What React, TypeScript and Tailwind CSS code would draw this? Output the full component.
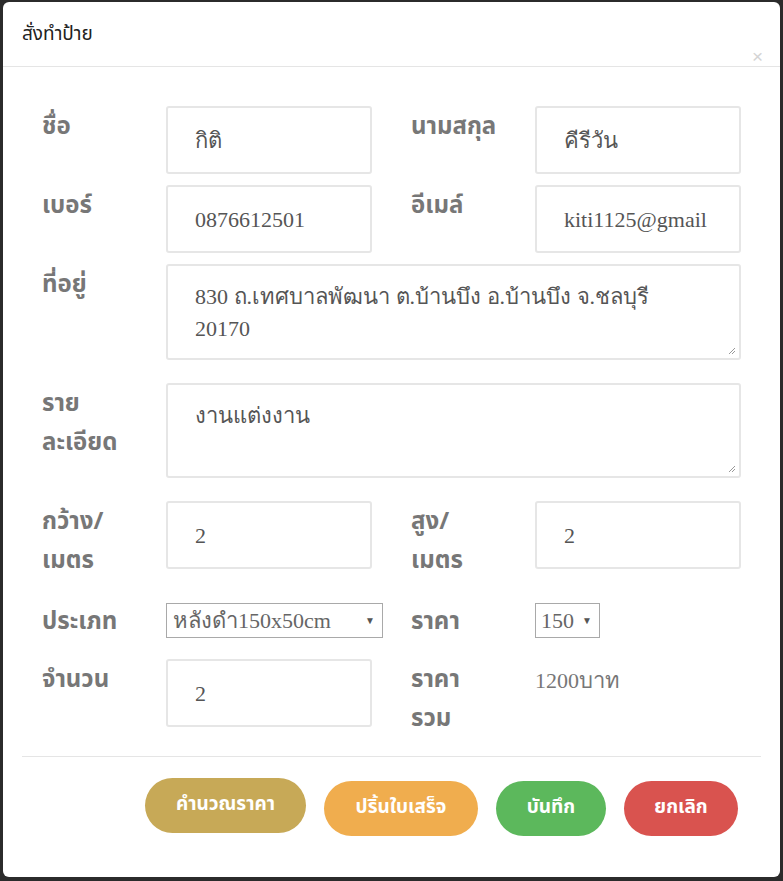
import React from "react";

const labelCls =
  "pt-[2px] text-[24px] leading-[39px] font-bold text-[#777] [font-family:'Noto_Sans_Thai','Noto_Sans','DejaVu_Sans',sans-serif]";
const inputCls =
  "h-[68px] w-[206px] rounded-[3px] border-2 border-[#e6e6e6] bg-white pl-[27px] flex items-center text-[22px] text-[#555] [font-family:'Liberation_Serif','DejaVu_Serif',serif] overflow-hidden whitespace-nowrap";

function Field({ value }: { value: string }) {
  return <div className={inputCls}>{value}</div>;
}

function ResizeGrip() {
  return (
    <svg
      className="absolute right-[3px] bottom-[3px]"
      width="8"
      height="8"
      viewBox="0 0 8 8"
    >
      <line x1="1" y1="7" x2="7" y2="1" stroke="#999" strokeWidth="1" />
      <line x1="4" y1="7" x2="7" y2="4" stroke="#999" strokeWidth="1" />
    </svg>
  );
}

export default function App() {
  return (
    <div className="h-[881px] w-[783px] bg-[#2b2b2b] pt-[2px] pl-[3px] overflow-hidden">
      <div className="relative h-[875px] w-[777px] rounded-[6px] bg-white flex flex-col">
        {/* Header */}
        <div className="relative h-[65px] border-b border-[#e5e5e5] pl-[19px] pt-[19px]">
          <div className="text-[19px] leading-[28px] text-[#222] [font-family:'Noto_Sans_Thai','Noto_Sans','DejaVu_Sans',sans-serif]">
            สั่งทำป้าย
          </div>
          <div className="absolute right-[17px] top-[45px] text-[19px] leading-[19px] text-[#d4d4d4] [font-family:'Liberation_Sans',sans-serif]">
            ×
          </div>
        </div>

        {/* Body */}
        <div className="pl-[39px] pt-[39px] flex flex-col">
          {/* Row 1 */}
          <div className="flex">
            <div className={`${labelCls} w-[124px]`}>ชื่อ</div>
            <Field value="กิติ" />
            <div className={`${labelCls} w-[124px] ml-[39px]`}>นามสกุล</div>
            <Field value="คีรีวัน" />
          </div>
          {/* Row 2 */}
          <div className="flex mt-[11px]">
            <div className={`${labelCls} w-[124px]`}>เบอร์</div>
            <Field value="0876612501" />
            <div className={`${labelCls} w-[124px] ml-[39px]`}>อีเมล์</div>
            <Field value="kiti1125@gmail" />
          </div>
          {/* Row 3 */}
          <div className="flex mt-[11px]">
            <div className={`${labelCls} w-[124px]`}>ที่อยู่</div>
            <div className="relative h-[96px] w-[575px] rounded-[3px] border-2 border-[#e6e6e6] pl-[27px] pt-[15px] text-[22px] leading-[32px] text-[#555] [font-family:'Liberation_Serif','DejaVu_Serif',serif]">
              830 ถ.เทศบาลพัฒนา ต.บ้านบึง อ.บ้านบึง จ.ชลบุรี
              <br />
              20170
              <ResizeGrip />
            </div>
          </div>
          {/* Row 4 */}
          <div className="flex mt-[23px]">
            <div className={`${labelCls} w-[124px]`}>
              ราย
              <br />
              ละเอียด
            </div>
            <div className="relative h-[95px] w-[575px] rounded-[3px] border-2 border-[#e6e6e6] pl-[27px] pt-[15px] text-[22px] leading-[32px] text-[#555] [font-family:'Liberation_Serif','DejaVu_Serif',serif]">
              งานแต่งงาน
              <ResizeGrip />
            </div>
          </div>
          {/* Row 5 */}
          <div className="flex mt-[23px]">
            <div className={`${labelCls} w-[124px]`}>
              กว้าง/
              <br />
              เมตร
            </div>
            <Field value="2" />
            <div className={`${labelCls} w-[124px] ml-[39px]`}>
              สูง/
              <br />
              เมตร
            </div>
            <Field value="2" />
          </div>
          {/* Row 6 */}
          <div className="flex mt-[20px] items-start">
            <div className={`${labelCls} w-[124px]`}>ประเภท</div>
            <div className="mt-[2px] flex items-center justify-between h-[35px] w-[217px] border border-[#a9a9a9] pl-[6px] pr-[7px] text-[22px] text-[#666] [font-family:'Liberation_Serif','DejaVu_Serif',serif] whitespace-nowrap">
              <span>หลังดำ150x50cm</span>
              <span className="text-[10px] text-[#555]">▼</span>
            </div>
            <div className={`${labelCls} w-[124px] ml-[28px]`}>ราคา</div>
            <div className="mt-[2px] flex items-center gap-[8px] h-[35px] w-[65px] border border-[#a9a9a9] pl-[5px] text-[22px] text-[#666] [font-family:'Liberation_Serif','DejaVu_Serif',serif]">
              <span>150</span>
              <span className="text-[10px] text-[#555]">▼</span>
            </div>
          </div>
          {/* Row 7 */}
          <div className="flex mt-[17px]">
            <div className={`${labelCls} w-[124px]`}>จำนวน</div>
            <Field value="2" />
            <div className={`${labelCls} w-[124px] ml-[39px]`}>
              ราคา
              <br />
              รวม
            </div>
            <div className="pt-[2px] text-[22px] leading-[39px] text-[#777] [font-family:'Liberation_Serif','DejaVu_Serif',serif]">
              1200บาท
            </div>
          </div>
        </div>

        {/* Footer */}
        <div className="mx-[19px] mt-[17px] border-t border-[#e5e5e5]" />
        <div className="flex justify-end items-start gap-[18px] pr-[42px] pt-[21px] text-white font-bold text-[19px] [font-family:'Noto_Sans_Thai','Noto_Sans','DejaVu_Sans',sans-serif]">
          <div className="h-[55px] w-[161px] rounded-full bg-[#c7a957] flex items-center justify-center">
            คำนวณราคา
          </div>
          <div className="mt-[3px] h-[55px] w-[154px] rounded-full bg-[#f0ad4e] flex items-center justify-center">
            ปริ้นใบเสร็จ
          </div>
          <div className="mt-[3px] h-[55px] w-[110px] rounded-full bg-[#5cb85c] flex items-center justify-center">
            บันทึก
          </div>
          <div className="mt-[3px] h-[55px] w-[114px] rounded-full bg-[#d9534f] flex items-center justify-center">
            ยกเลิก
          </div>
        </div>
      </div>
    </div>
  );
}
